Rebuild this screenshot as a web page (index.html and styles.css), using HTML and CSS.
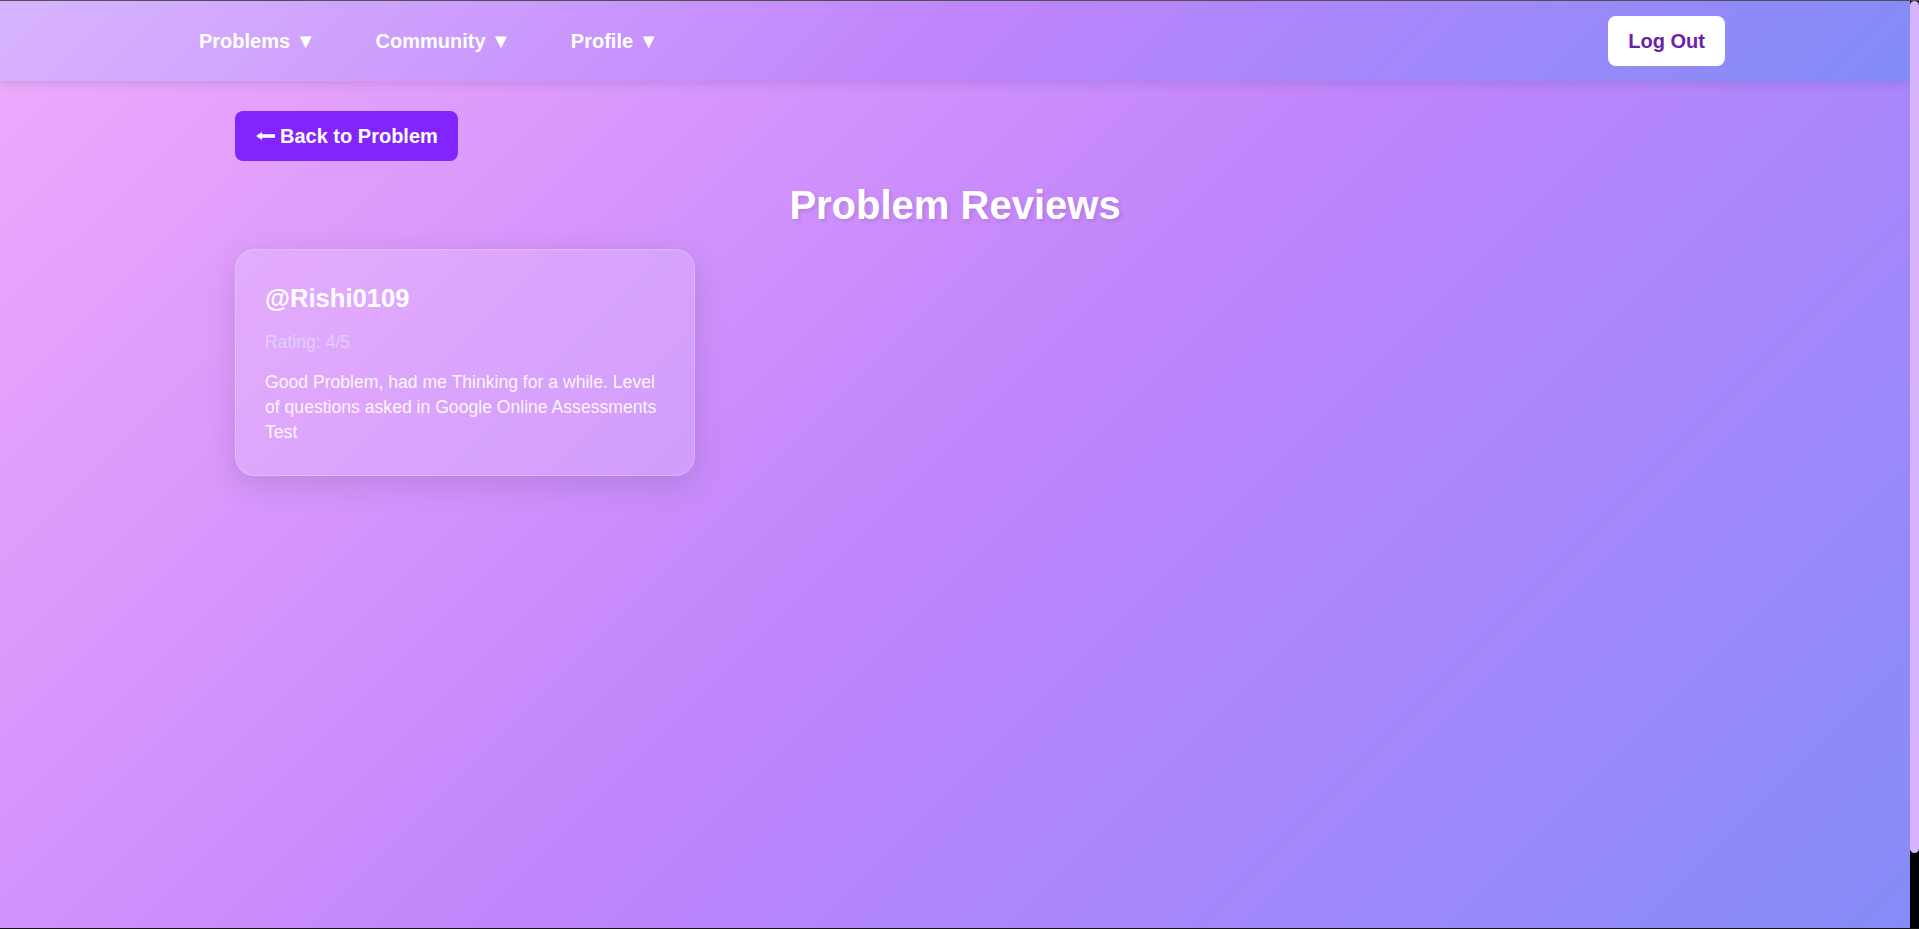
FILE: index.html
```html
<!DOCTYPE html>
<html lang="en">
<head>
<meta charset="UTF-8">
<title>Problem Reviews</title>
<link rel="stylesheet" href="styles.css">
</head>
<body>
<div class="viewport">
  <div class="page">
    <nav class="navbar">
      <div class="nav-links">
        <a class="nav-link" href="#">Problems ▼</a>
        <a class="nav-link" href="#">Community ▼</a>
        <a class="nav-link" href="#">Profile ▼</a>
      </div>
      <button class="logout-btn" type="button">Log Out</button>
    </nav>
    <main class="container">
      <a class="back-btn" href="#"><svg class="back-arrow" width="20" height="10" viewBox="0 0 20 10" aria-hidden="true"><polygon points="1,5 7,1 7,9" fill="#fff"/><rect x="6" y="3.2" width="14" height="3.6" fill="#fff"/></svg>Back to Problem</a>
      <h1 class="page-title">Problem Reviews</h1>
      <div class="reviews-grid">
        <div class="review-card">
          <h3 class="review-user">@Rishi0109</h3>
          <p class="review-rating">Rating: 4/5</p>
          <p class="review-text">Good Problem, had me Thinking for a while. Level of questions asked in Google Online Assessments Test</p>
        </div>
      </div>
    </main>
  </div>
  <div class="scrollbar"><div class="scroll-thumb"></div></div>
</div>
</body>
</html>
```
FILE: styles.css
```css
html, body {
  margin: 0;
  height: 100%;
  overflow: hidden;
}

body {
  font-family: "Liberation Sans", Arial, sans-serif;
  color: #fff;
  background: #000;
}

.viewport {
  height: 100vh;
  box-sizing: border-box;
  border-top: 1px solid #505050;
  border-bottom: 1px solid #111;
  display: flex;
}

.page {
  flex: 1;
  min-width: 0;
  overflow: hidden;
  background: linear-gradient(135deg, #f0abfc 0%, #c084fc 50%, #818cf8 100%);
  background-size: 100% 1009px;
  background-repeat: no-repeat;
}

.scrollbar {
  width: 9px;
  background: #000;
}

.scroll-thumb {
  height: 852px;
  background: #d8b4fe;
  border-radius: 5px;
}

.navbar {
  height: 80px;
  box-sizing: border-box;
  display: flex;
  align-items: center;
  justify-content: space-between;
  padding: 0 185px 0 199px;
  background: linear-gradient(135deg, #d8b4fe 0%, #c084fc 50%, #818cf8 100%);
  box-shadow: 0 2px 10px rgba(0, 0, 0, 0.12);
  position: relative;
  z-index: 2;
}

.nav-links {
  display: flex;
  gap: 60px;
}

.nav-link {
  color: #fff;
  text-decoration: none;
  font-weight: 700;
  font-size: 20px;
  line-height: 24px;
}

.logout-btn {
  font-family: inherit;
  font-weight: 700;
  font-size: 20px;
  line-height: 24px;
  color: #6b21a8;
  background: #fff;
  border: none;
  border-radius: 8px;
  padding: 13px 20px;
}

.container {
  max-width: 1440px;
  margin: 0 auto;
  padding-top: 30px;
}

.back-btn {
  display: flex;
  align-items: center;
  width: fit-content;
  padding: 13px 20px;
  background: #8224fd;
  color: #fff;
  text-decoration: none;
  font-weight: 700;
  font-size: 20px;
  line-height: 24px;
  border-radius: 8px;
}

.back-arrow {
  margin-right: 5px;
}

.page-title {
  margin: 20px 0 20px;
  text-align: center;
  font-size: 40px;
  line-height: 48px;
  font-weight: 700;
  text-shadow: 2px 2px 4px rgba(0, 0, 0, 0.12);
}

.reviews-grid {
  display: grid;
  grid-template-columns: repeat(auto-fill, minmax(400px, 1fr));
  gap: 30px;
}

.review-card {
  background: rgba(255, 255, 255, 0.15);
  border: 1px solid rgba(255, 255, 255, 0.22);
  border-radius: 20px;
  padding: 30px 29px;
  box-shadow: 0 8px 32px rgba(0, 0, 0, 0.12);
}

.review-user {
  margin: 3px 0 17px;
  font-size: 25.6px;
  line-height: 30px;
  font-weight: 700;
}

.review-rating {
  margin: 0 0 15px;
  font-size: 17.6px;
  line-height: 25px;
  color: #e2cffd;
}

.review-text {
  margin: 0;
  font-size: 17.6px;
  line-height: 25px;
  color: rgba(255, 255, 255, 0.92);
}
```
